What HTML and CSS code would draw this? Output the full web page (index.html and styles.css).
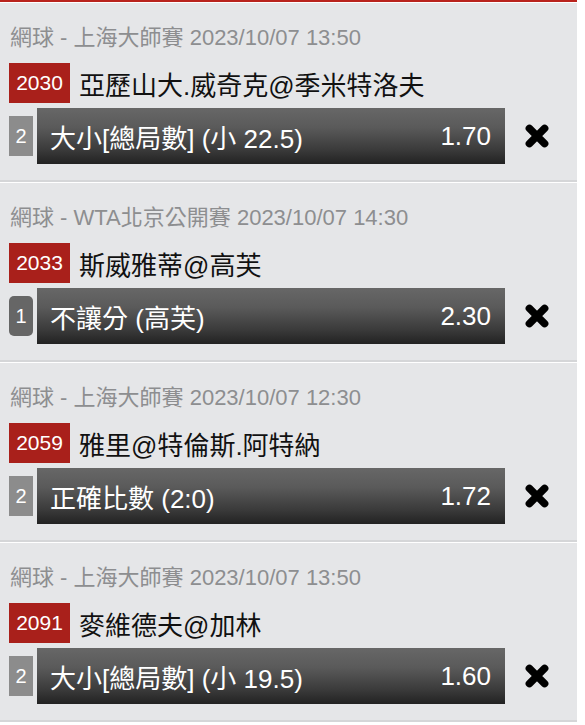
FILE: index.html
```html
<!DOCTYPE html>
<html lang="zh-Hant">
<head>
    <meta charset="UTF-8">
    <meta name="viewport" content="width=device-width, initial-scale=1.0">
    <title>投注單</title>
    <link rel="stylesheet" href="styles.css">
</head>
<body>
    <div class="slip">
        <div class="bet">
            <div class="bet-info">網球 - 上海大師賽 2023/10/07 13:50</div>
            <div class="bet-match">
                <span class="match-no">2030</span>
                <span class="match-name">亞歷山大.威奇克@季米特洛夫</span>
            </div>
            <div class="bet-row">
                <span class="leg">2</span>
                <div class="pick">
                    <span class="pick-name">大小[總局數] (小 22.5)</span>
                    <span class="odds">1.70</span>
                </div>
                <button type="button" class="remove"><svg viewBox="0 0 24 24" width="26" height="26"><path d="M5 5 L19 19 M19 5 L5 19"/></svg></button>
            </div>
        </div>

        <div class="bet">
            <div class="bet-info">網球 - WTA北京公開賽 2023/10/07 14:30</div>
            <div class="bet-match">
                <span class="match-no">2033</span>
                <span class="match-name">斯威雅蒂@高芙</span>
            </div>
            <div class="bet-row">
                <span class="leg leg-round">1</span>
                <div class="pick">
                    <span class="pick-name">不讓分 (高芙)</span>
                    <span class="odds">2.30</span>
                </div>
                <button type="button" class="remove"><svg viewBox="0 0 24 24" width="26" height="26"><path d="M5 5 L19 19 M19 5 L5 19"/></svg></button>
            </div>
        </div>

        <div class="bet">
            <div class="bet-info">網球 - 上海大師賽 2023/10/07 12:30</div>
            <div class="bet-match">
                <span class="match-no">2059</span>
                <span class="match-name">雅里@特倫斯.阿特納</span>
            </div>
            <div class="bet-row">
                <span class="leg">2</span>
                <div class="pick">
                    <span class="pick-name">正確比數 (2:0)</span>
                    <span class="odds">1.72</span>
                </div>
                <button type="button" class="remove"><svg viewBox="0 0 24 24" width="26" height="26"><path d="M5 5 L19 19 M19 5 L5 19"/></svg></button>
            </div>
        </div>

        <div class="bet">
            <div class="bet-info">網球 - 上海大師賽 2023/10/07 13:50</div>
            <div class="bet-match">
                <span class="match-no">2091</span>
                <span class="match-name">麥維德夫@加林</span>
            </div>
            <div class="bet-row">
                <span class="leg">2</span>
                <div class="pick">
                    <span class="pick-name">大小[總局數] (小 19.5)</span>
                    <span class="odds">1.60</span>
                </div>
                <button type="button" class="remove"><svg viewBox="0 0 24 24" width="26" height="26"><path d="M5 5 L19 19 M19 5 L5 19"/></svg></button>
            </div>
        </div>
    </div>
</body>
</html>
```

FILE: styles.css
```css
body {
    margin: 0;
    background-color: #fff;
    font-family: "Liberation Sans", Arial, "Noto Sans CJK TC", sans-serif;
}
.slip {
    width: 577px;
    background-color: #e5e6e8;
    border-top: 2px solid #b9231d;
}
.bet {
    border-top: 1px solid #fff;
    border-bottom: 2px solid #d5d6d8;
    padding: 22px 0 16px 9px;
}
.bet-info {
    font-size: 22px;
    line-height: 26px;
    color: #8d8e90;
    padding-left: 1px;
}
.bet-match {
    display: flex;
    align-items: center;
    margin-top: 12px;
    height: 40px;
}
.match-no {
    background-color: #a9201b;
    color: #fff;
    font-size: 21px;
    width: 61px;
    height: 40px;
    line-height: 40px;
    text-align: center;
}
.match-name {
    margin-left: 9px;
    font-size: 26px;
    color: #111;
}
.bet-row {
    display: flex;
    align-items: center;
    margin-top: 5px;
}
.leg {
    width: 24px;
    height: 40px;
    line-height: 40px;
    text-align: center;
    background-color: #8c8c8c;
    color: #fff;
    font-size: 20px;
}
.leg-round {
    background-color: #666;
    border-radius: 5px;
}
.pick {
    display: flex;
    justify-content: space-between;
    align-items: center;
    width: 468px;
    height: 56px;
    margin-left: 4px;
    padding: 0 14px 0 13px;
    box-sizing: border-box;
    background: linear-gradient(#676767 0%, #5a5a5a 35%, #3a3a3a 75%, #222 100%);
    color: #fff;
    font-size: 26px;
}
.remove {
    margin-left: 19px;
    padding: 0;
    border: none;
    background: none;
    width: 26px;
    height: 26px;
}
.remove svg {
    display: block;
    filter: blur(0.6px);
}
.remove path {
    stroke: #000;
    stroke-width: 7;
    stroke-linecap: round;
    fill: none;
}
```
